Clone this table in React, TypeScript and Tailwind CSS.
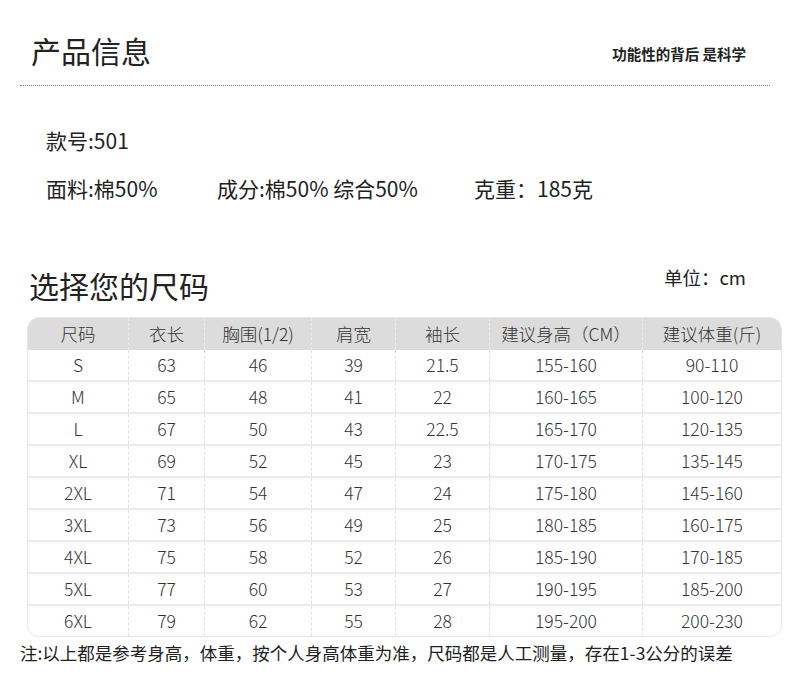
import React from "react";

const HEAD = ["尺码", "衣长", "胸围(1/2)", "肩宽", "袖长", "建议身高（CM）", "建议体重(斤)"];

const ROWS = [
  ["S", "63", "46", "39", "21.5", "155-160", "90-110"],
  ["M", "65", "48", "41", "22", "160-165", "100-120"],
  ["L", "67", "50", "43", "22.5", "165-170", "120-135"],
  ["XL", "69", "52", "45", "23", "170-175", "135-145"],
  ["2XL", "71", "54", "47", "24", "175-180", "145-160"],
  ["3XL", "73", "56", "49", "25", "180-185", "160-175"],
  ["4XL", "75", "58", "52", "26", "185-190", "170-185"],
  ["5XL", "77", "60", "53", "27", "190-195", "185-200"],
  ["6XL", "79", "62", "55", "28", "195-200", "200-230"],
];

const COLS = "grid grid-cols-[100px_76px_107px_84px_94px_153px_1fr]";

export default function App() {
  return (
    <div
      className="w-[790px] h-[691px] bg-white text-[#222] overflow-hidden"
      style={{ fontFamily: '"Noto Sans CJK SC", "Noto Sans", sans-serif' }}
    >
      {/* top heading */}
      <div className="flex items-end justify-between h-[30px] mt-[35px] pl-[31px] pr-[44px]">
        <h1 className="text-[30px] leading-[30px] font-normal">产品信息</h1>
        <span className="text-[14.5px] leading-[20px] font-bold mb-[1px]">功能性的背后 是科学</span>
      </div>
      <div className="mx-[20px] mt-[20px] border-t border-dotted border-[#7a7a7a]" />

      {/* product info */}
      <div className="pl-[46px] mt-[40px] text-[21px] leading-[28px]">款号:501</div>
      <div className="flex pl-[46px] mt-[20px] text-[21px] leading-[28px]">
        <span className="w-[171px]">面料:棉50%</span>
        <span className="w-[257px]">成分:棉50% 综合50%</span>
        <span>克重：185克</span>
      </div>

      {/* size heading */}
      <div className="flex items-start justify-between mt-[63px] pl-[29px] pr-[44px]">
        <h2 className="text-[30px] leading-[36px] font-normal mt-[2px]">选择您的尺码</h2>
        <span className="text-[18.5px] leading-[24px]">单位：cm</span>
      </div>

      {/* table */}
      <div className="ml-[27px] mt-[14px] w-[755px] border border-[#e6e6e6] rounded-[12px] overflow-hidden text-[#333] text-[17.5px] font-light">
        <div className={`${COLS} h-[32px] bg-[#dcdcdc]`}>
          {HEAD.map((h, i) => (
            <div
              key={h}
              className={`flex items-center justify-center ${i > 0 ? "border-l border-dashed border-[#ececec]" : ""}`}
            >
              {h}
            </div>
          ))}
        </div>
        {ROWS.map((row, r) => (
          <div key={row[0]} className={`${COLS} h-[30px] box-content ${r > 0 ? "border-t-2 border-[#ebebeb]" : ""}`}>
            {row.map((c, i) => (
              <div
                key={i}
                className={`flex items-center justify-center ${i > 0 ? "border-l border-dashed border-[#dedede]" : ""}`}
              >
                {c}
              </div>
            ))}
          </div>
        ))}
      </div>

      <p className="ml-[20px] mt-[5px] text-[17.5px] leading-[22px] text-[#222]">
        注:以上都是参考身高，体重，按个人身高体重为准，尺码都是人工测量，存在1-3公分的误差
      </p>
    </div>
  );
}
